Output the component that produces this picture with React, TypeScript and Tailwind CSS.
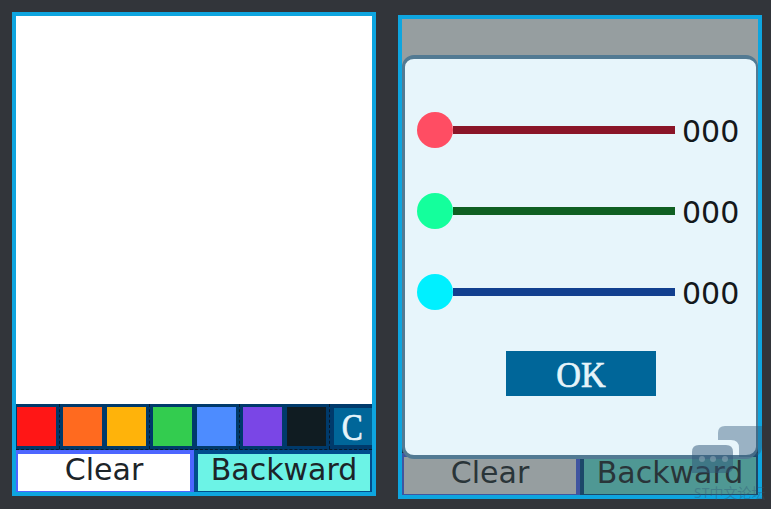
const swatches = [
  { color: 'bg-[#ff1616]', ml: 'ml-[1px]', sep: true },
  { color: 'bg-[#ff6a1f]', ml: 'ml-[3px]', sep: false },
  { color: 'bg-[#ffb30a]', ml: 'ml-[5px]', sep: true },
  { color: 'bg-[#33cc4f]', ml: 'ml-[3px]', sep: false },
  { color: 'bg-[#4d8cff]', ml: 'ml-[5px]', sep: true },
  { color: 'bg-[#7a46e6]', ml: 'ml-[3px]', sep: false },
  { color: 'bg-[#101c22]', ml: 'ml-[5px]', sep: true },
];

const sliders = [
  { thumb: 'bg-[#ff4d63]', track: 'bg-[#8a1528]' },
  { thumb: 'bg-[#14ff9c]', track: 'bg-[#0f5f22]' },
  { thumb: 'bg-[#00f0ff]', track: 'bg-[#123f8f]' },
];

const ACTION_TEXT = "font-['DejaVu_Sans',sans-serif] text-[30px] leading-none text-[#1c2428]";
const SERIF_TEXT = "font-['Liberation_Serif',serif] leading-none text-[#e6f4fa] [-webkit-text-stroke:0.7px_#e6f4fa]";

const Screen = () => (
  <>
    <div className="h-[388px] bg-white" />
    <div className="flex h-[46px] items-center border-b border-dashed border-b-[#07182a] bg-[#003a6b]">
      {swatches.map((s) => (
        <div key={s.color} className="flex items-center self-stretch">
          <div className={`h-[39px] w-[39px] self-center ${s.ml} ${s.color}`} />
          {s.sep && <div className="ml-[3px] h-full w-0 border-l border-dashed border-[#07182a]" />}
        </div>
      ))}
      <div className={`ml-[4px] flex h-[37px] w-[38px] items-center justify-center bg-[#006699] pr-[2px] pt-[2px] text-[37px] ${SERIF_TEXT}`}>
        <span className="inline-block scale-x-[.85]">C</span>
      </div>
    </div>
    <div className="flex h-[42px]">
      <div className={`flex w-[178px] items-center justify-center border-b-[1px] border-l-[2px] border-r-[4px] border-t-[4px] border-[#4d66ff] bg-white pb-[5px] ${ACTION_TEXT}`}>
        Clear
      </div>
      <div className={`flex w-[178px] items-center justify-center border-b-[1px] border-l-[4px] border-r-[2px] border-t-[4px] border-[#004d8c] bg-[#6cf3e6] pb-[5px] ${ACTION_TEXT}`}>
        Backward
      </div>
    </div>
  </>
);

const Dialog = () => (
  <div className="absolute inset-x-0 top-[36px] flex h-[404px] flex-col rounded-[12px] border-y-[4px] border-l-[3px] border-r-[2px] border-[#527a93] bg-[#e7f5fb] pl-[12px]">
    <div className="flex flex-col gap-[45px] pt-[53px]">
      {sliders.map((s) => (
        <div key={s.track} className="flex h-[36px] items-center">
          <div className={`h-[36px] w-[36px] rounded-full ${s.thumb}`} />
          <div className={`h-[8px] w-[222px] ${s.track}`} />
          <span className="ml-[7px] pt-[4px] font-['DejaVu_Sans',sans-serif] text-[30px] leading-none text-[#14181b]">000</span>
        </div>
      ))}
    </div>
    <div className={`ml-[89px] mt-[41px] flex h-[45px] w-[150px] items-center justify-center bg-[#006699] pt-[2px] text-[36px] ${SERIF_TEXT}`}>
      <span className="inline-block scale-x-[.95]">OK</span>
    </div>
  </div>
);

const Watermark = () => (
  <div className="absolute left-[692px] top-[426px] h-[76px] w-[72px]">
    <svg width="72" height="54" viewBox="0 0 72 54" className="absolute left-0 top-0">
      <path d="M26 7 Q26 0 33 0 H70 V20 Q70 31 58 31 H47 V22 Q47 14 39 14 H26 Z" fill="#2f5577" fillOpacity="0.42" />
      <path d="M7 19 H34 Q41 19 41 26 V40 Q41 47 34 47 H0 V26 Q0 19 7 19 Z" fill="#2f5577" fillOpacity="0.5" />
      <circle cx="10" cy="33" r="3" fill="#8fa9b8" fillOpacity="0.55" />
      <circle cx="21" cy="33" r="3" fill="#8fa9b8" fillOpacity="0.55" />
      <circle cx="33" cy="33" r="3" fill="#8fa9b8" fillOpacity="0.55" />
    </svg>
    <span className="absolute left-[2px] top-[60px] whitespace-nowrap font-['Noto_Sans','Noto_Sans_CJK_SC',sans-serif] text-[14px] leading-none text-[#2f5577]/40">
      ST中文论坛
    </span>
  </div>
);

export default function App() {
  return (
    <div className="relative h-[509px] w-[771px] overflow-hidden bg-[#32353a]">
      <div className="flex items-start gap-[22px] pl-[12px] pt-[12px]">
        <div className="w-[364px] border-[4px] border-[#0ea5df]">
          <Screen />
        </div>
        <div className="relative mt-[3px] w-[364px] border-[4px] border-[#0ea5df]">
          <Screen />
          <div className="absolute inset-0 bg-[#354549]/[.52]" />
          <Dialog />
        </div>
      </div>
      <Watermark />
    </div>
  );
}
